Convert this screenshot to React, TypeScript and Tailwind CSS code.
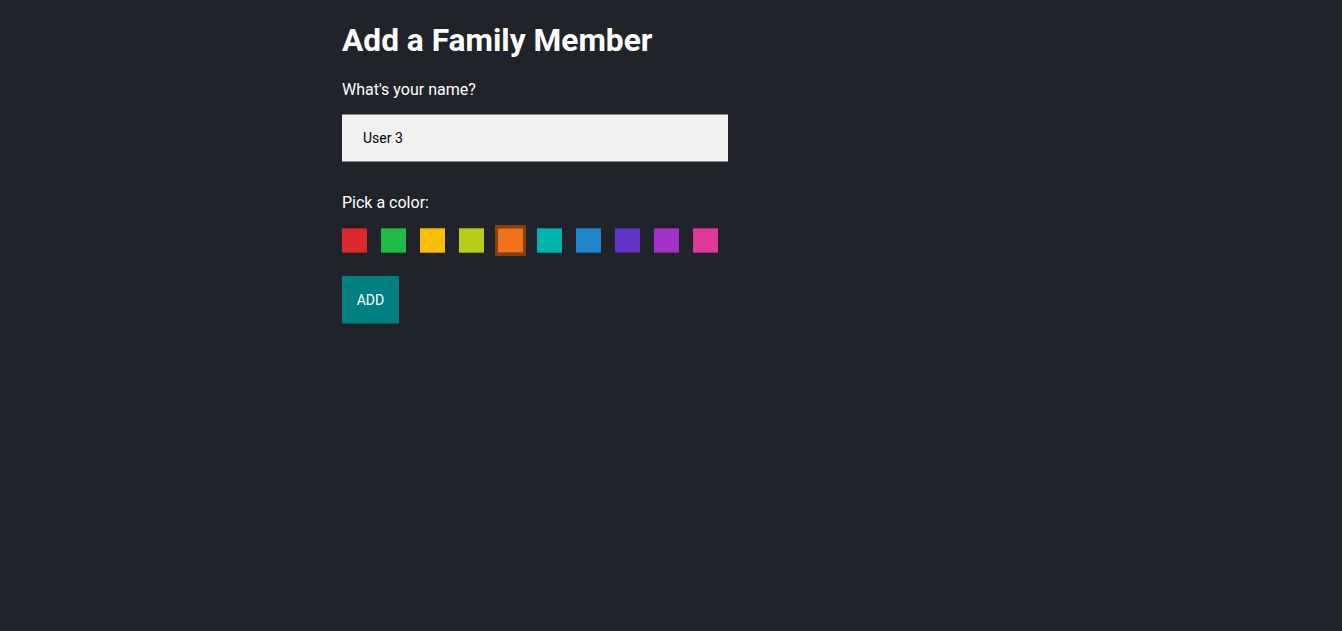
import React, { useState } from "react";

const COLORS = [
  "#db2828",
  "#21ba45",
  "#fbbd08",
  "#b5cc18",
  "#f2711c",
  "#00b5ad",
  "#2185d0",
  "#6435c9",
  "#a333c8",
  "#e03997",
];

export default function App() {
  const [name, setName] = useState("User 3");
  const [selected, setSelected] = useState(4);
  return (
    <div className="min-h-screen w-full bg-[#20232a] text-white font-['Roboto',sans-serif]">
      <div className="mx-auto w-[658px] pt-[22px]">
        <h1 className="text-[31.7px] font-bold leading-[37.5px] text-white">Add a Family Member</h1>
        <div className="mt-[20px] text-[16px] leading-[19px]">What's your name?</div>
        <input
          value={name}
          onChange={(e) => setName(e.target.value)}
          className="mt-[15px] block h-[48px] w-[386px] border-y border-y-[#8a8a8a] bg-[#f1f1f1] pl-[21px] text-[14px] text-black outline-none"
        />
        <div className="mt-[31px] text-[16px] leading-[19px]">Pick a color:</div>
        <div className="mt-[16px] flex gap-[14px]">
          {COLORS.map((c, i) => (
            <button
              key={c}
              onClick={() => setSelected(i)}
              className={
                "h-[25px] w-[25px] shadow-[inset_0_1px_0_rgba(0,0,0,0.25),inset_0_-1px_0_rgba(0,0,0,0.25)] " +
                (i === selected ? "outline-[3px] outline-solid outline-[#8a3f10]" : "")
              }
              style={{ backgroundColor: c }}
            />
          ))}
        </div>
        <button className="mt-[23px] flex h-[48px] w-[57px] items-center justify-center pt-[2px] bg-[#008080] text-[14px] text-white shadow-[inset_0_-1px_0_rgba(0,0,0,0.3)]">
          ADD
        </button>
      </div>
    </div>
  );
}
